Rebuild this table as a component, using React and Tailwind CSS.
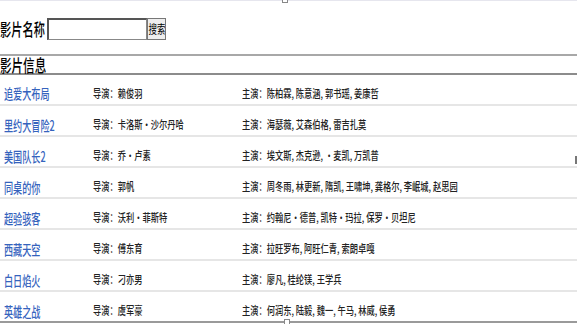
import React from "react";

const rows = [
  ["追爱大布局", "赖俊羽", "陈柏霖, 陈意涵, 郭书瑶, 姜康哲"],
  ["里约大冒险2", "卡洛斯·沙尔丹哈", "海瑟薇, 艾森伯格, 雷吉扎莫"],
  ["美国队长2", "乔·卢素", "埃文斯, 杰克逊, ·麦凯, 万凯普"],
  ["同桌的你", "郭帆", "周冬雨, 林更新, 隋凯, 王啸坤, 龚格尔, 李岷城, 赵思园"],
  ["超验骇客", "沃利·菲斯特", "约翰尼·德普, 凯特·玛拉, 保罗·贝坦尼"],
  ["西藏天空", "傅东育", "拉旺罗布, 阿旺仁青, 索朗卓嘎"],
  ["白日焰火", "刁亦男", "廖凡, 桂纶镁, 王学兵"],
  ["英雄之战", "虞军豪", "何润东, 陆毅, 魏一, 午马, 林威, 侯勇"],
];

export default function App() {
  return (
    <div className="relative w-[577px] h-[324px] overflow-hidden bg-white text-black font-['Noto_Sans_CJK_SC','Noto_Sans',sans-serif]">
      {/* selection frame top */}
      <div className="h-[2px] border-t border-[#e6e6ee]" />
      <div className="absolute left-[282px] top-[-2px] w-[6px] h-[5px] border border-[#888] bg-white" />
      <div className="absolute right-0 top-[156px] w-[2px] h-[8px] bg-[#777]" />

      {/* search row */}
      <div className="mt-[16px] flex items-center h-[22px]">
        <div className="w-[47px] h-[22px] flex items-center overflow-visible">
          <span className="inline-block origin-left scale-x-[0.66] whitespace-nowrap text-[17px] leading-[22px] font-medium">
            影片名称
          </span>
        </div>
        <div className="w-[100px] h-[22px] border-t-2 border-l-2 border-b border-r border-t-[#555] border-l-[#555] border-b-[#888] border-r-[#888] bg-white" />
        <div className="w-[19px] h-[22px] flex items-center justify-center border border-[#777] bg-[#eeeeee] overflow-hidden">
          <span className="inline-block scale-x-[0.7] whitespace-nowrap text-[12px] leading-[14px]">
            搜索
          </span>
        </div>
      </div>

      {/* header */}
      <div className="mt-[14px] border-t-2 border-[#a8a8a8] border-b-2 border-b-[#8c8c8c] h-[21px] flex items-center">
        <span className="inline-block origin-left scale-x-[0.68] whitespace-nowrap text-[17px] leading-[19px] font-medium">
          影片信息
        </span>
      </div>

      {/* rows */}
      <div className="flex flex-col">
        {rows.map((r, i) => (
          <div
            key={i}
            className={
              "h-[31px] flex border-b-2 " +
              (i === rows.length - 1 ? "border-[#9a9a9a]" : "border-[#e6e6e6]")
            }
          >
            <div className={"w-[90px] pl-[4px] " + (i === 0 ? "pt-[5px]" : "pt-[6px]")}>
              <span className="inline-block origin-left scale-x-[0.65] whitespace-nowrap text-[14px] leading-[18px] font-medium text-[#3563bd]">
                {r[0]}
              </span>
            </div>
            <div className={"w-[147px] pl-[3px] " + (i === 0 ? "pt-[4px]" : "pt-[4px]")}>
              <span className="inline-block origin-left scale-x-[0.75] whitespace-nowrap text-[11px] leading-[15px] font-medium text-[#222]">
                导演：{r[1]}
              </span>
            </div>
            <div className={"flex-1 pl-[5px] " + (i === 0 ? "pt-[4px]" : "pt-[4px]")}>
              <span className="inline-block origin-left scale-x-[0.75] whitespace-nowrap text-[11px] leading-[15px] font-medium text-[#222]">
                主演：{r[2]}
              </span>
            </div>
          </div>
        ))}
      </div>
      <div className="absolute left-[284px] top-[319px] w-[6px] h-[6px] border border-[#888] bg-white" />
    </div>
  );
}
